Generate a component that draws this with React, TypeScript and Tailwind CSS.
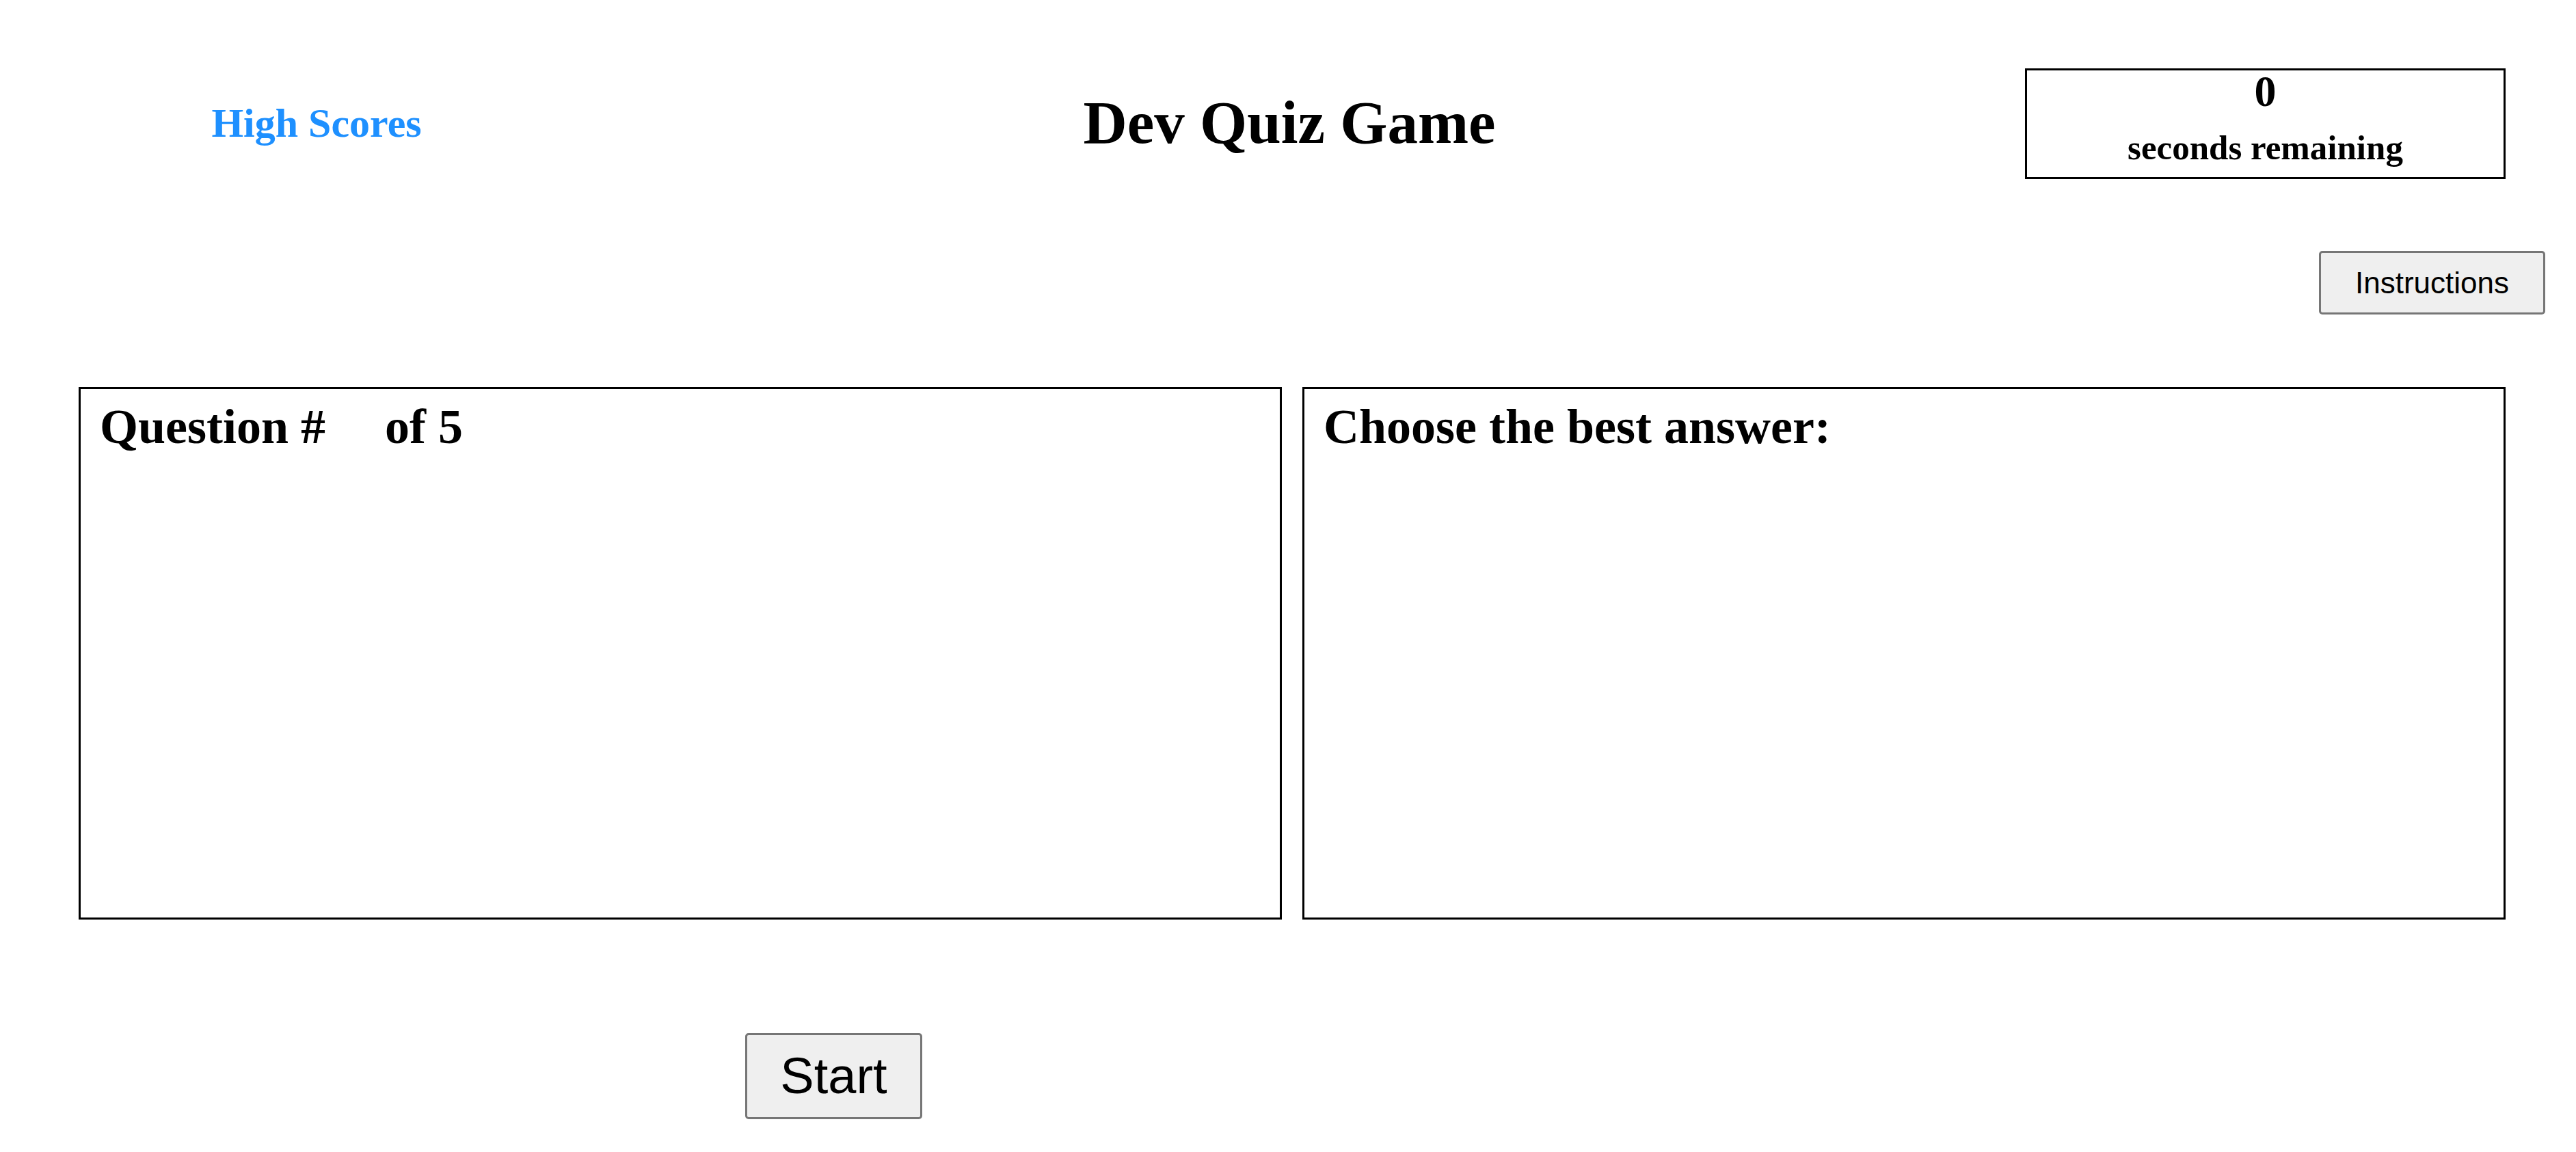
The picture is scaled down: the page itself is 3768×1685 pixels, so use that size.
import React, { useState } from 'react';

const App = () => {
    const [timeLeft] = useState<number>(0);
    const [questionNum] = useState<string>('');
    const totalQuestions = 5;

    return (
        <div className="w-[3768px] h-[1685px] bg-white text-black font-['Liberation_Serif',serif] overflow-hidden">
            {/* header */}
            <header className="flex items-start h-[262px]">
                <div className="w-[926px] pt-[150px] text-center">
                    <a href="#" className="text-[60px] leading-[60px] font-bold text-[#1e90ff]">High Scores</a>
                </div>
                <div className="flex-1 pt-[135px] text-center">
                    <h1 className="text-[89px] leading-[89px] font-bold">Dev Quiz Game</h1>
                </div>
                <div className="w-[922px] pt-[100px]">
                    <div className="ml-[116px] w-[703px] h-[162px] border-[3px] border-black text-center font-bold">
                        <div className="text-[64px] leading-[61px]">{timeLeft}</div>
                        <div className="mt-[22px] text-[51px] leading-[60px]">seconds remaining</div>
                    </div>
                </div>
            </header>

            <div className="flex justify-end pr-[45px] mt-[105px]">
                <button className="w-[331px] h-[93px] border-[3px] border-[#767676] rounded-[5px] bg-[#efefef] font-['Liberation_Sans',Arial,sans-serif] text-[44px] leading-none">
                    Instructions
                </button>
            </div>

            <main className="flex gap-[30px] pl-[115px] mt-[106px]">
                <section className="w-[1760px] h-[779px] border-[3px] border-black px-[28px] pt-[19px]">
                    <h2 className="text-[72px] leading-[72px] font-bold whitespace-pre">
                        Question #<span className="inline-block w-[87px]">{questionNum}</span>of {totalQuestions}
                    </h2>
                </section>
                <section className="w-[1760px] h-[779px] border-[3px] border-black px-[28px] pt-[19px]">
                    <h2 className="text-[72px] leading-[72px] font-bold">Choose the best answer:</h2>
                </section>
            </main>

            <div className="pl-[1090px] mt-[166px]">
                <button className="w-[259px] h-[126px] border-[3px] border-[#767676] rounded-[5px] bg-[#efefef] font-['Liberation_Sans',Arial,sans-serif] text-[74px] leading-none">
                    Start
                </button>
            </div>
        </div>
    );
};

export default App;
